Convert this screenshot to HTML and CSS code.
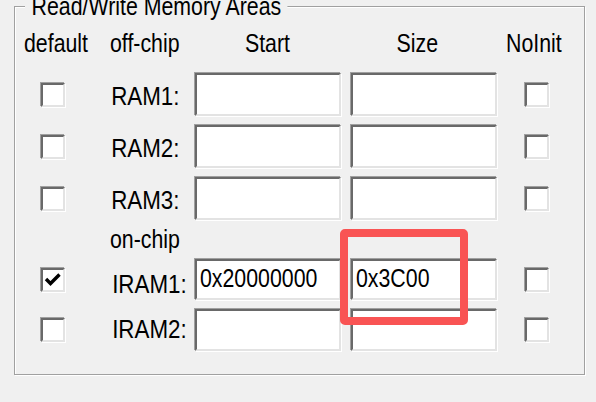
FILE: index.html
```html
<!DOCTYPE html>
<html>
<head>
<meta charset="utf-8">
<link rel="stylesheet" href="styles.css">
</head>
<body>
<div class="dialog">
  <div class="group">
    <span class="legend">Read/Write Memory Areas</span>
    <div class="grid">
      <div class="hd hd-default"><span class="t">default</span></div>
      <div class="hd hd-chip"><span class="t">off-chip</span></div>
      <div class="hd hd-start"><span class="t tc">Start</span></div>
      <div class="hd hd-size"><span class="t tc">Size</span></div>
      <div class="hd hd-noinit"><span class="t">NoInit</span></div>

      <div class="cell-check"><span class="cb"></span></div>
      <div class="label"><span class="t tr">RAM1:</span></div>
      <div class="tb"></div>
      <div class="tb"></div>
      <div class="cell-check cell-noinit"><span class="cb"></span></div>

      <div class="cell-check"><span class="cb"></span></div>
      <div class="label"><span class="t tr">RAM2:</span></div>
      <div class="tb"></div>
      <div class="tb"></div>
      <div class="cell-check cell-noinit"><span class="cb"></span></div>

      <div class="cell-check"><span class="cb"></span></div>
      <div class="label"><span class="t tr">RAM3:</span></div>
      <div class="tb"></div>
      <div class="tb"></div>
      <div class="cell-check cell-noinit"><span class="cb"></span></div>

      <div class="onchip"><span class="t">on-chip</span></div>

      <div class="cell-check"><span class="cb"><svg class="tick" viewBox="0 0 20 20" width="20" height="20"><path d="M3 9 L7.5 13.5 L16.5 4.5" fill="none" stroke="#000" stroke-width="3.4"/></svg></span></div>
      <div class="label label-i1"><span class="t tr">IRAM1:</span></div>
      <div class="tb"><span class="t">0x20000000</span></div>
      <div class="tb"><span class="t">0x3C00</span></div>
      <div class="cell-check cell-noinit"><span class="cb"></span></div>

      <div class="cell-check"><span class="cb"></span></div>
      <div class="label label-i2"><span class="t tr">IRAM2:</span></div>
      <div class="tb"></div>
      <div class="tb"></div>
      <div class="cell-check cell-noinit"><span class="cb"></span></div>
    </div>
  </div>
  <div class="highlight"></div>
</div>
</body>
</html>
```
FILE: styles.css
```css
html, body {
  margin: 0;
  padding: 0;
  background: #f0f0f0;
}
body {
  width: 596px;
  height: 402px;
  overflow: hidden;
  font-family: "Liberation Sans", Arial, sans-serif;
  font-size: 26px;
  line-height: 30px;
  color: #000;
}
.t {
  display: inline-block;
  white-space: nowrap;
  transform: scaleX(0.82);
  transform-origin: left center;
}
.tc { transform-origin: center center; }
.tr {
  transform: scaleX(0.86);
  transform-origin: right center;
}
.dialog {
  position: relative;
  width: 596px;
  height: 402px;
  padding-top: 6px;
  box-sizing: border-box;
}
.group {
  position: relative;
  margin-left: 14px;
  width: 571px;
  height: 369px;
  box-sizing: border-box;
  border: 1px solid #a0a0a0;
  box-shadow: inset 1px 1px 0 #fff, 1px 1px 0 #fff;
  padding-top: 21px;
}
.legend {
  position: absolute;
  left: 10px;
  top: -16px;
  padding: 0 8px;
  background: #f0f0f0;
  white-space: nowrap;
  transform: scaleX(0.82);
  transform-origin: left center;
}
.grid {
  display: grid;
  grid-template-columns: 85px 94px 156px 147px 1fr;
  grid-template-rows: 37px 45px 45px 45px 23px 43px 44px;
  row-gap: 7px;
}
.hd {
  align-self: start;
  white-space: nowrap;
}
.hd-default { padding-left: 9px; }
.hd-chip { padding-left: 10px; }
.hd-start { text-align: center; padding-right: 9px; }
.hd-size { text-align: center; padding-right: 12px; }
.hd-noinit { padding-left: 9px; }
.onchip {
  grid-column: 2 / -1;
  padding-left: 10px;
  line-height: 23px;
  white-space: nowrap;
}
.label {
  align-self: start;
  text-align: right;
  padding-right: 15px;
  padding-top: 9px;
  white-space: nowrap;
}
.label-i1 { padding-top: 11px; }
.label-i2 { padding-top: 6px; }
.cell-check {
  display: flex;
  align-items: center;
  padding-left: 26px;
}
.cell-noinit { padding-left: 28px; }
.cb {
  display: block;
  width: 24px;
  height: 24px;
  box-sizing: border-box;
  background: #fff;
  border: 2px solid;
  border-color: #696969 #e3e3e3 #e3e3e3 #696969;
  box-shadow: -1px -1px 0 #a0a0a0, 1px 1px 0 #fff;
}
.tick {
  display: block;
}
.tb {
  margin: 1px;
  width: 146px;
  box-sizing: border-box;
  background: #fff;
  border: 2px solid;
  border-color: #696969 #e3e3e3 #e3e3e3 #696969;
  box-shadow: -1px -1px 0 #a0a0a0, 1px 1px 0 #fff;
  padding: 2px 0 0 3px;
  white-space: nowrap;
  overflow: hidden;
}
.highlight {
  position: absolute;
  left: 340px;
  top: 229px;
  width: 128px;
  height: 96px;
  box-sizing: border-box;
  border: 8px solid #f95454;
  border-radius: 5px;
}
```
